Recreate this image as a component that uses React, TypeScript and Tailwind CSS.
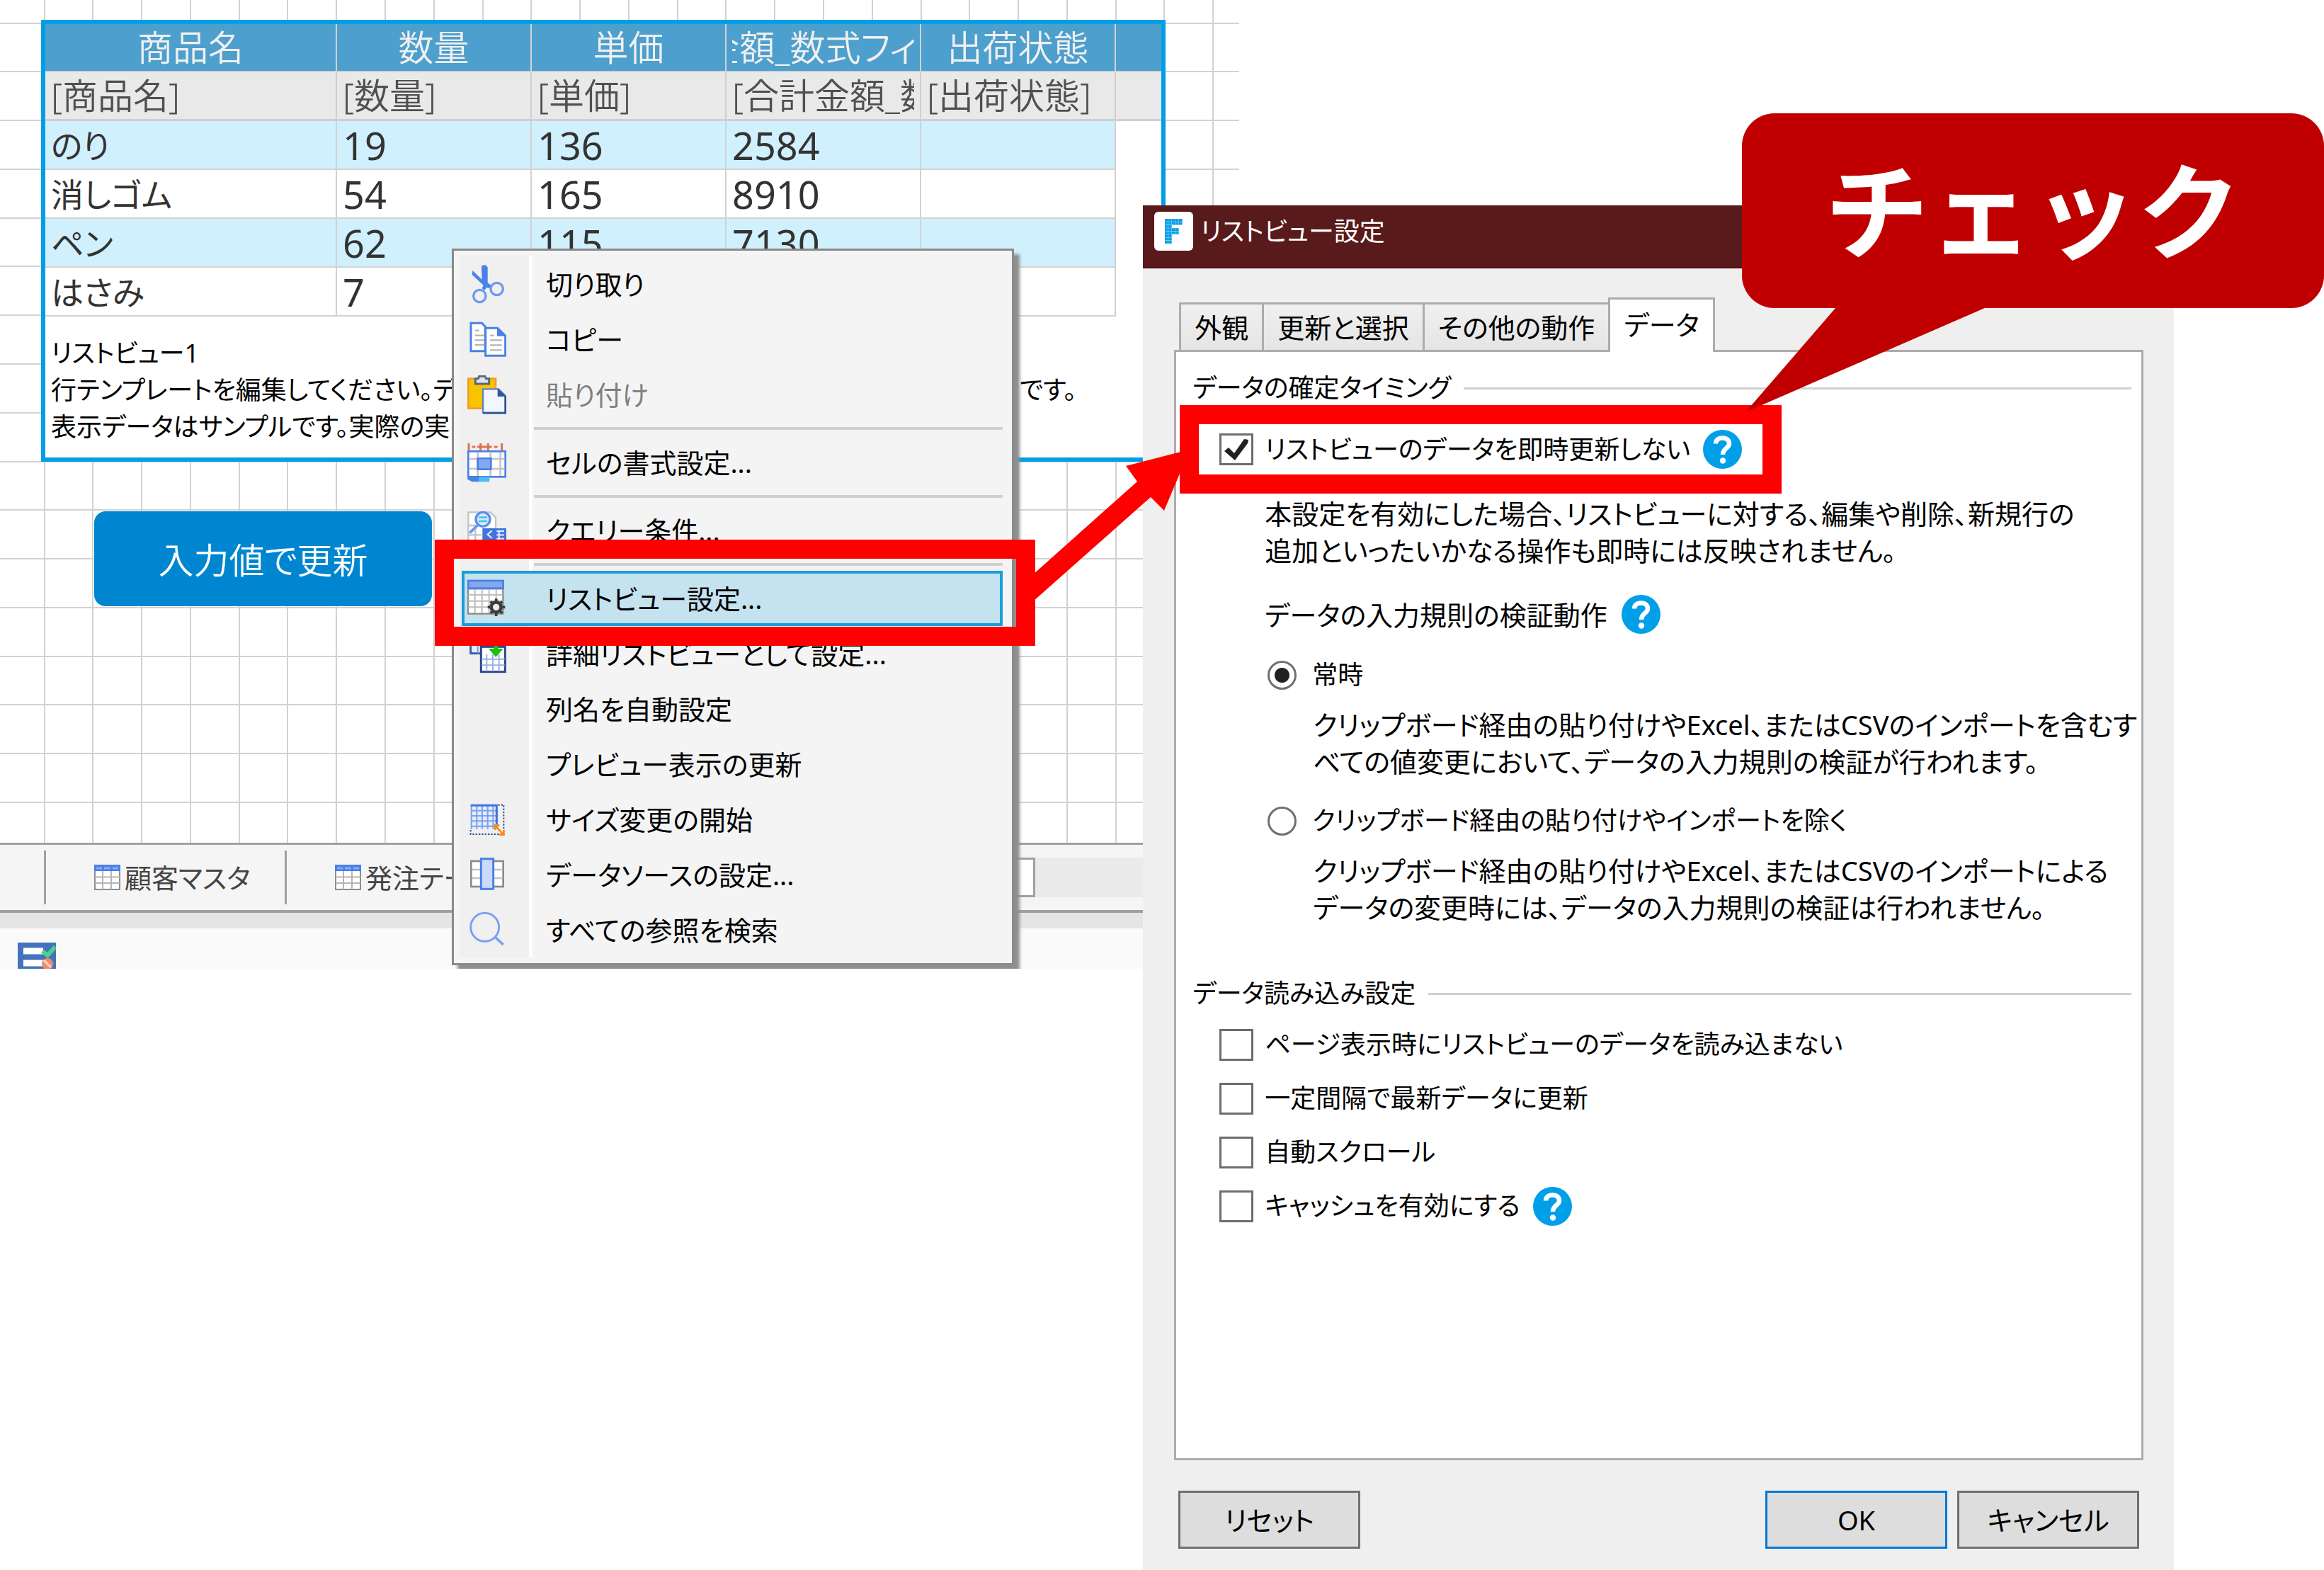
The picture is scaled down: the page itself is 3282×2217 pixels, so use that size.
import React, { useState } from "react";

const columns = ["商品名", "数量", "単価", "合計金額_数式フィールド", "出荷状態"];

const rows = [
  ["のり", "19", "136", "2584", ""],
  ["消しゴム", "54", "165", "8910", ""],
  ["ペン", "62", "115", "7130", ""],
  ["はさみ", "7", "", "", ""],
];

const gridStep = 68.78;

function SheetGrid() {
  return (
    <svg className="absolute inset-0 w-full h-full" aria-hidden="true">
      {Array.from({ length: 25 }).map((_, i) => (
        <rect key={`v${i}`} x={Math.round(61.5 + i * gridStep)} y="0" width="2" height="100%" fill="#d2d2d2" />
      ))}
      {Array.from({ length: 17 }).map((_, i) => (
        <rect key={`h${i}`} x="0" y={Math.round(31.5 + i * gridStep)} width="100%" height="2" fill="#d2d2d2" />
      ))}
    </svg>
  );
}

function TableIcon() {
  return (
    <svg viewBox="0 0 37 36" className="w-[37px] h-9 shrink-0" aria-hidden="true">
      <rect x="1" y="1" width="35" height="34" fill="#fff" stroke="#8c8c8c" strokeWidth="2" />
      <path d="M12 9V35M24 9V35M1 17.500H36M1 26H36" stroke="#b5b5b5" strokeWidth="2" />
      <rect width="37" height="9" fill="#4a80e8" />
      <path d="M3 5H11M14 5H23M26 5H34" stroke="#86abf2" strokeWidth="3" />
    </svg>
  );
}

function HelpIcon() {
  return (
    <button type="button" aria-label="ヘルプ" className="shrink-0">
      <svg viewBox="0 0 55 55" className="w-[55px] h-[55px]">
        <circle cx="27.500" cy="27.500" r="27.500" fill="#009fe8" />
        <path d="M18 19.500C18 14.500 22 11.500 27.500 11.500C33 11.500 37 14.500 37 19.500C37 26 28 26 28 35" fill="none" stroke="#fff" strokeWidth="6.500" />
        <circle cx="28" cy="43.500" r="4.200" fill="#fff" />
      </svg>
    </button>
  );
}

function AppIcon() {
  const dots = ["11111", "11111", "11000", "11110", "11110", "11000", "11000", "11000"];
  return (
    <svg viewBox="0 0 55 55" className="w-[55px] h-[55px] shrink-0" aria-hidden="true">
      <rect width="55" height="55" rx="6" fill="#fff" />
      {dots.map((line, y) =>
        line.split("").map((d, x) =>
          d === "1" ? <rect key={`${x}-${y}`} x={15 + x * 5} y={10 + y * 4.4} width="4.700" height="4.100" fill="#0c9ee9" /> : null
        )
      )}
    </svg>
  );
}

function Icon({ children }: { children?: React.ReactNode }) {
  return (
    <svg viewBox="0 0 165 165" className="w-[55px] h-[55px] shrink-0" fill="none" aria-hidden="true">
      {children}
    </svg>
  );
}

const icons: Record<string, React.ReactNode> = {
  cut: (
    <>
      <path d="M60 4L76 0L86 10L86 76L102 88L94 98L82 96L72 108L62 100L68 86L20 42L22 24L62 62Z" fill="#4a80e8" />
      <circle cx="52" cy="132" r="26" stroke="#6d9af0" strokeWidth="10" />
      <circle cx="125" cy="102" r="26" stroke="#6d9af0" strokeWidth="10" />
    </>
  ),
  copy: (
    <>
      <path d="M15 13H62L76 28V131H15Z" fill="#fff" stroke="#4a80e8" strokeWidth="9" />
      <path d="M32 44H50M32 65H72M32 85H72M32 105H72" stroke="#b5b5b5" strokeWidth="7" />
      <path d="M77 34H128L161 66V151H77Z" fill="#fff" stroke="#4a80e8" strokeWidth="9" />
      <path d="M126 32V68H162Z" fill="#4a80e8" />
      <path d="M96 65H112M96 85H146M96 106H146M96 127H146" stroke="#b5b5b5" strokeWidth="7" />
    </>
  ),
  paste: (
    <>
      <rect x="4" y="14" width="116" height="126" fill="#f8c400" stroke="#f59a2e" strokeWidth="8" />
      <path d="M34 36V14H46L50 4H74L80 14H92V36Z" fill="#dfe5f0" stroke="#5d6675" strokeWidth="9" />
      <path d="M66 58H132L161 86V158H66Z" fill="#f4f6fd" stroke="#5c83c8" strokeWidth="7" />
      <path d="M128 54L165 90H128Z" fill="#31569d" />
      <path d="M161 88V160H66" stroke="#274a92" strokeWidth="7" />
    </>
  ),
  cell: (
    <>
      <path d="M6 0V30M146 0V30M56 0V30M88 0V30M20 15H34M42 15H104M114 15H128" stroke="#e0714f" strokeWidth="9" />
      <rect x="4" y="34" width="157" height="108" fill="#fff" stroke="#4a80e8" strokeWidth="8" />
      <path d="M44 38V138M98 38V138M140 38V138M8 66H158M8 108H158" stroke="#c4c4c4" strokeWidth="8" />
      <rect x="44" y="64" width="56" height="46" fill="#83a8f0" stroke="#4a80e8" strokeWidth="8" />
      <path d="M0 142H50V163H20L0 152Z" fill="#4a80e8" />
      <path d="M50 142H94V163H50Z" fill="#49bdf5" />
    </>
  ),
  query: (
    <>
      <path d="M4 4H98L120 26V156H4Z" fill="#fff" stroke="#c4c4c4" strokeWidth="7" />
      <path d="M4 60H60M4 100H60M34 60V156" stroke="#c4c4c4" strokeWidth="7" />
      <circle cx="66" cy="34" r="30" fill="#d8ecfb" stroke="#5b8df0" strokeWidth="10" />
      <path d="M48 26H84M48 42H84" stroke="#49bdf5" strokeWidth="8" />
      <path d="M44 58L10 92" stroke="#6d9af0" strokeWidth="12" />
      <rect x="64" y="72" width="101" height="90" fill="#3f73dd" />
      <path d="M104 82L86 98L104 114M124 84H156M124 100H156M124 116H156M134 80V120" stroke="#dbe6fd" strokeWidth="7" />
    </>
  ),
  listview: (
    <>
      <rect x="3" y="40" width="148" height="106" fill="#fff" stroke="#8b8b8b" strokeWidth="7" />
      <path d="M32 40V144M62 40V144M92 40V144M122 40V144M4 66H150M4 92H150M4 118H150" stroke="#bdbdbd" strokeWidth="6" />
      <rect x="4" y="6" width="148" height="32" fill="#83a8f0" stroke="#4a80e8" strokeWidth="8" />
      <circle cx="122" cy="118" r="21" fill="#eee" stroke="#3d3d3d" strokeWidth="14" />
      <path d="M122 82V94M122 142V156M86 118H96M148 118H160M98 94L105 101M140 136L148 144M148 94L140 101M98 144L105 136" stroke="#3d3d3d" strokeWidth="11" />
    </>
  ),
  detail: (
    <>
      <rect x="14" y="14" width="92" height="66" fill="#e8eefc" stroke="#3c5fa8" strokeWidth="9" />
      <path d="M44 14V80M74 14V80M14 46H106" stroke="#7f9cd8" strokeWidth="6" />
      <rect x="58" y="52" width="102" height="106" fill="#fff" stroke="#27488f" strokeWidth="9" />
      <path d="M82 84V156M108 84V156M134 84V156M60 104H158M60 130H158" stroke="#9db2df" strokeWidth="6" />
      <path d="M112 30V60H90L121 96L152 60H130V30Z" fill="#1dbd12" />
    </>
  ),
  resize: (
    <>
      <rect x="14" y="20" width="116" height="102" fill="#e4ecfd" />
      <path d="M17 20V122M40 20V122M63 20V122M86 20V122M109 20V122M14 44H130M14 66H130M14 88H130M14 110H130" stroke="#7da0e8" strokeWidth="6" />
      <path d="M14 22H124V120" stroke="#3f73dd" strokeWidth="9" />
      <path d="M130 20H154V144H14V122" stroke="#2c4f96" strokeWidth="6" strokeDasharray="7 6" />
      <path d="M118 108L150 142M118 126V106H136M154 126V146H134" stroke="#f98b1b" strokeWidth="8" />
    </>
  ),
  source: (
    <>
      <rect x="16" y="24" width="136" height="108" fill="#fff" stroke="#8b8b8b" strokeWidth="8" />
      <path d="M18 60H150M18 96H150" stroke="#c4c4c4" strokeWidth="7" />
      <rect x="58" y="14" width="52" height="128" fill="#c9dafb" stroke="#4a80e8" strokeWidth="9" />
    </>
  ),
  search: (
    <>
      <circle cx="74" cy="70" r="60" stroke="#7aa2f5" strokeWidth="9" />
      <path d="M118 112L152 144" stroke="#7aa2f5" strokeWidth="11" />
    </>
  ),
};

const menuItems = [
  { label: "切り取り", icon: "cut" },
  { label: "コピー", icon: "copy" },
  { label: "貼り付け", icon: "paste", disabled: true },
  { label: "セルの書式設定...", icon: "cell", separator: true },
  { label: "クエリー条件...", icon: "query", separator: true },
  { label: "リストビュー設定...", icon: "listview", separator: true, active: true },
  { label: "詳細リストビューとして設定...", icon: "detail" },
  { label: "列名を自動設定", icon: "" },
  { label: "プレビュー表示の更新", icon: "" },
  { label: "サイズ変更の開始", icon: "resize" },
  { label: "データソースの設定...", icon: "source" },
  { label: "すべての参照を検索", icon: "search" },
];

function ContextMenu() {
  return (
    <div className="absolute left-[638px] top-[351px] w-[794px] border-[3px] border-[#8a8a8a] bg-[#f4f4f4] py-2 shadow-[8px_8px_4px_#8f8f8f]">
      {/* Icon gutter */}
      <div className="absolute left-2 inset-y-2 w-[103px] bg-[#f0f0f0] border-r-[5px] border-white" />
      <ul className="relative pl-[11px] pr-[13px]">
        {menuItems.map((item) => (
          <li key={item.label}>
            {item.separator && (
              <div className="h-[18px] pl-[102px] flex items-center">
                <div className="h-1 w-full bg-[#d0d0d0]" />
              </div>
            )}
            <button
              type="button"
              disabled={item.disabled}
              className={`relative w-full h-[78px] flex items-center gap-14 pl-1 border-4 text-[38px] whitespace-nowrap
                ${item.active ? "z-10 border-[#1a9edb] bg-[#c5e2ef]" : "border-transparent"}
                ${item.disabled ? "text-[#808080]" : "text-black"}`}
            >
              <Icon>{icons[item.icon]}</Icon>
              {item.label}
              {item.active && (
                <span className="absolute -left-[42px] -right-[50px] -top-12 -bottom-8 border-[27px] border-[#ff0000]" />
              )}
            </button>
          </li>
        ))}
      </ul>
    </div>
  );
}

function ListView() {
  return (
    <div className="relative ml-[58px] mr-[104px] border-[6px] border-[#009fe5] bg-white pb-[17px]">
      <table className="w-full table-fixed border-separate border-spacing-0 text-[50px] leading-[60px] text-left">
        <colgroup>
          <col className="w-[412px]" />
          <col className="w-[275px]" />
          <col className="w-[275px]" />
          <col className="w-[275px]" />
          <col className="w-[275px]" />
          <col />
        </colgroup>
        <thead>
          <tr className="h-[68px] bg-[#4d9fcd] text-[#f0f0f0]">
            {columns.map((c) => (
              <th key={c} className="p-0 px-2 font-[350] border-r-2 border-b-2 border-[#d2d2d2]">
                <div className="flex justify-center overflow-x-clip whitespace-nowrap">{c}</div>
              </th>
            ))}
            <th className="border-b-2 border-[#d2d2d2]" />
          </tr>
        </thead>
        <tbody>
          <tr className="h-[69px] bg-[#e9e9e9] text-[#505050]">
            {columns.map((c) => (
              <td key={c} className="p-0 pl-2 pr-2 font-[350] border-r-2 border-b-[3px] border-[#cfcfcf]">
                <div className="overflow-x-clip whitespace-nowrap">[{c}]</div>
              </td>
            ))}
            <td className="border-b-[3px] border-[#cfcfcf]" />
          </tr>
          {rows.map((row, i) => (
            <tr key={i} className="h-[69px] text-[#333]">
              {row.map((cell, j) => (
                <td
                  key={j}
                  className={`p-0 pl-2 border-r-2 border-b-2 border-[#d2d2d2]
                    ${j === 0 ? "text-[46px]" : "text-[54px]"}
                    ${i % 2 === 0 ? "bg-[#d1f0fe]" : "bg-white"}`}
                >
                  {cell}
                </td>
              ))}
              <td />
            </tr>
          ))}
        </tbody>
      </table>
      <div className="mt-[26px] pl-2 text-[36px] leading-[52px] whitespace-nowrap text-black">
        <p>リストビュー1</p>
        <p className="flex justify-between pr-[120px]">
          <span>行テンプレートを編集してください。デ</span>
          <span>です。</span>
        </p>
        <p>表示データはサンプルです。実際の実</p>
      </div>
    </div>
  );
}

function Designer() {
  return (
    <section className="relative w-[53.33%] shrink-0 self-start overflow-hidden bg-white">
      <div className="relative pt-7 pb-[334px]">
        <SheetGrid />
        <ListView />
        <button
          type="button"
          className="relative block mt-[70px] ml-[133px] w-[477px] h-[134px] pt-1 rounded-2xl bg-[#0086d0] text-white text-[50px] font-[350]"
        >
          入力値で更新
        </button>
      </div>

      {/* Sheet tabs */}
      <div className="h-[99px] border-t-[3px] border-b-4 border-[#a0a0a0] bg-[#f5f5f5] flex items-center text-[38px] text-[#444]">
        <div className="w-[62px]" />
        <div className="w-[340px] h-[76px] border-l-[3px] border-[#a0a0a0] flex items-center gap-[6px] pl-[68px] whitespace-nowrap">
          <TableIcon />
          顧客マスタ
        </div>
        <div className="w-[340px] h-[76px] border-l-[3px] border-[#a0a0a0] flex items-center gap-[6px] pl-[68px] whitespace-nowrap">
          <TableIcon />
          発注テー
        </div>
        <div className="flex-1 h-14 ml-[500px] bg-[#eaeaea]">
          <div className="w-[220px] h-14 border-[3px] border-[#a0a0a0] bg-white" />
        </div>
      </div>
      <div className="h-[22px] bg-[#e5e5e5]" />
      <div className="h-[57px] pt-5 pl-[25px] bg-[#fafafa] overflow-hidden">
        <svg viewBox="0 0 54 50" className="w-[54px] h-[50px]" aria-hidden="true">
          <rect width="54" height="50" fill="#4472bc" />
          <path d="M8 12H36M8 29H36" stroke="#fff" strokeWidth="9" />
          <path d="M35 12L42 18L53 6" fill="none" stroke="#4fd08b" strokeWidth="6" />
          <circle cx="42" cy="30" r="8" fill="#f08a68" />
          <path d="M37 25L47 35" stroke="#fbd5c8" strokeWidth="3" />
        </svg>
      </div>

      <ContextMenu />
    </section>
  );
}

function CheckBox({ id, label, checked }: { id: string; label: string; checked?: boolean }) {
  return (
    <>
      <span className="relative w-12 h-[45px] shrink-0">
        <input id={id} type="checkbox" defaultChecked={checked} className="peer block appearance-none w-full h-full border-[3px] border-[#6d6d6d] bg-white" />
        <svg viewBox="0 0 48 45" className="absolute inset-0 hidden peer-checked:block pointer-events-none" aria-hidden="true">
          <path d="M7 25L13 20L21 28L35 8L41 9L40 14L22 38Z" fill="#212121" />
        </svg>
      </span>
      <label htmlFor={id} className="ml-4 text-[36px]">{label}</label>
    </>
  );
}

function GroupTitle({ children }: { children: React.ReactNode }) {
  return (
    <h2 className="flex items-center gap-[18px] text-[36px] whitespace-nowrap">
      {children}
      <span className="flex-1 h-[3px] bg-[#d0d0d0]" />
    </h2>
  );
}

const validationModes = [
  {
    id: "always",
    label: "常時",
    lines: ["クリップボード経由の貼り付けやExcel、またはCSVのインポートを含むす", "べての値変更において、データの入力規則の検証が行われます。"],
  },
  {
    id: "exceptImport",
    label: "クリップボード経由の貼り付けやインポートを除く",
    lines: ["クリップボード経由の貼り付けやExcel、またはCSVのインポートによる", "データの変更時には、データの入力規則の検証は行われません。"],
  },
];

const loadOptions = [
  { id: "noload", label: "ページ表示時にリストビューのデータを読み込まない" },
  { id: "interval", label: "一定間隔で最新データに更新" },
  { id: "autoscroll", label: "自動スクロール" },
  { id: "cache", label: "キャッシュを有効にする", help: true },
];

function SettingsDialog() {
  const [tab, setTab] = useState("データ");
  const [mode, setMode] = useState("always");

  return (
    <section className="relative flex-1 min-w-0 -ml-[136px] mr-[212px] mt-[290px] flex flex-col bg-[#efefef] text-[38px] leading-[52px] text-black">
      <header className="h-[89px] pl-4 pt-[9px] flex items-start gap-[10px] bg-[#581a1a] border-b-2 border-[#4c0f10] text-white">
        <AppIcon />
        <h1 className="text-[36px] leading-[56px]">リストビュー設定</h1>
      </header>

      <div className="flex-1 flex flex-col pt-[41px] pb-[30px] pl-11 pr-[43px]">
        {/* Tabs */}
        <div role="tablist" className="h-[74px] pl-[7px] flex items-end whitespace-nowrap">
          {["外観", "更新と選択", "その他の動作", "データ"].map((t) => (
            <button
              key={t}
              type="button"
              role="tab"
              aria-selected={tab === t}
              onClick={() => setTab(t)}
              className={`relative border-[3px] border-[#acacac]
                ${tab === t ? "z-10 h-[77px] -mb-[3px] px-[19px] pb-1 border-b-0 bg-white" : "h-[67px] px-[19px] border-r-0 border-b-0 bg-linear-to-b from-[#f0f0f0] to-[#e5e5e5]"}`}
            >
              {t}
            </button>
          ))}
        </div>

        <div className="flex-1 border-[3px] border-[#acacac] bg-white pt-[25px] pl-[23px] pr-[14px]">
          <GroupTitle>データの確定タイミング</GroupTitle>
          <div className="relative mt-[33px] ml-[38px] h-[55px] w-fit flex items-center">
            <CheckBox id="noInstant" label="リストビューのデータを即時更新しない" checked />
            <span className="ml-[18px] flex"><HelpIcon /></span>
            <span className="absolute -inset-x-14 -inset-y-[35px] border-[27px] border-[#ff0000] pointer-events-none" />
          </div>
          <div className="ml-[102px] whitespace-nowrap">
            <p className="mt-[37px]">
              本設定を有効にした場合、リストビューに対する、編集や削除、新規行の
              <br />
              追加といったいかなる操作も即時には反映されません。
            </p>
            <div className="mt-[37px] h-[55px] flex items-center gap-5">
              データの入力規則の検証動作
              <HelpIcon />
            </div>
            {validationModes.map((m) => (
              <div key={m.id} className="mt-8">
                <div className="flex items-center">
                  <input
                    id={m.id}
                    type="radio"
                    name="validation"
                    checked={mode === m.id}
                    onChange={() => setMode(m.id)}
                    className="appearance-none ml-1 w-[41px] h-[41px] rounded-full border-[3px] border-[#707070] bg-white checked:bg-[radial-gradient(circle,#212121_10px,#fff_11px)]"
                  />
                  <label htmlFor={m.id} className="ml-[22px] text-[36px]">{m.label}</label>
                </div>
                <p className="mt-[18px] ml-[68px]">
                  {m.lines[0]}
                  <br />
                  {m.lines[1]}
                </p>
              </div>
            ))}
          </div>

          <div className="mt-[70px]">
            <GroupTitle>データ読み込み設定</GroupTitle>
            <div className="mt-2 ml-[38px] whitespace-nowrap">
              {loadOptions.map((o) => (
                <div key={o.id} className="h-[76px] flex items-center">
                  <CheckBox id={o.id} label={o.label} />
                  {o.help && <span className="ml-[18px] flex"><HelpIcon /></span>}
                </div>
              ))}
            </div>
          </div>
        </div>

        <footer className="mt-[43px] px-[6px] flex gap-[14px]">
          <button type="button" className="w-[257px] h-[82px] mr-auto border-[3px] border-[#707070] bg-[#ddd]">リセット</button>
          <button type="button" className="w-[257px] h-[82px] border-[3px] border-[#0078d7] bg-[#ddd]">OK</button>
          <button type="button" className="w-[257px] h-[82px] border-[3px] border-[#707070] bg-[#ddd]">キャンセル</button>
        </footer>
      </div>
    </section>
  );
}

export default function App() {
  return (
    <main className="relative flex min-h-screen bg-white overflow-hidden font-['Noto_Sans','Noto_Sans_CJK_JP',sans-serif] font-normal [font-feature-settings:'palt']">
      <Designer />
      <SettingsDialog />

      {/* Arrow from the menu item to the option */}
      <svg viewBox="0 0 250 250" className="absolute left-[1440px] top-[630px] w-[250px] h-[250px] pointer-events-none" aria-hidden="true">
        <path d="M239 5L150 28L166 50L0 198V236L185 72L204 91L226 39Z" fill="#ff0000" />
      </svg>

      {/* Callout */}
      <div className="absolute right-0 top-40 w-[822px] h-[275px] rounded-[46px] bg-[#c00000] text-white flex items-center justify-center">
        <span className="text-[147px] leading-none font-bold [font-feature-settings:normal]">チェック</span>
        <svg viewBox="0 0 345 150" className="absolute left-0 top-[274px] w-[345px] h-[150px]" aria-hidden="true">
          <path d="M133 0H345L5 148Z" fill="#c00000" />
        </svg>
      </div>
    </main>
  );
}
